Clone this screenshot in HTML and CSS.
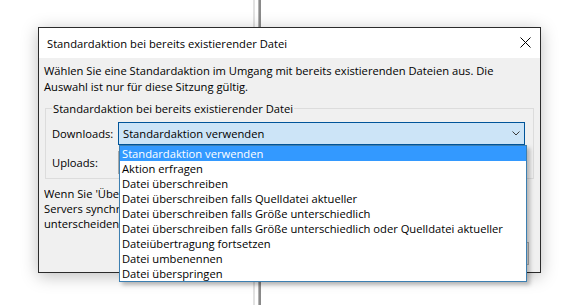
FILE: index.html
```html
<!DOCTYPE html>
<html lang="de">
<head>
<meta charset="utf-8">
<title>Standardaktion bei bereits existierender Datei</title>
<link rel="stylesheet" href="styles.css">
</head>
<body>
<div class="desktop">
  <div class="splitter"></div>

  <div class="dialog">
    <div class="titlebar">
      <span class="title">Standardaktion bei bereits existierender Datei</span>
      <svg class="close" width="11" height="11" viewBox="0 0 11 11">
        <path d="M0.5 0.5 L10.5 10.5 M10.5 0.5 L0.5 10.5" stroke="#000" stroke-width="1" fill="none"/>
      </svg>
    </div>

    <div class="content">
      <p class="intro">Wählen Sie eine Standardaktion im Umgang mit bereits existierenden Dateien aus. Die<br>Auswahl ist nur für diese Sitzung gültig.</p>

      <fieldset class="group">
        <legend>Standardaktion bei bereits existierender Datei</legend>
        <div class="row">
          <span class="lbl">Downloads:</span>
          <div class="combo open">
            <span>Standardaktion verwenden</span>
            <svg class="chev" width="8" height="5" viewBox="0 0 8 5"><path d="M0.5 0.5 L4 4 L7.5 0.5" stroke="#3b3b3b" fill="none"/></svg>
          </div>
        </div>
        <div class="row">
          <span class="lbl">Uploads:</span>
          <div class="combo">
            <span>Standardaktion verwenden</span>
            <svg class="chev" width="8" height="5" viewBox="0 0 8 5"><path d="M0.5 0.5 L4 4 L7.5 0.5" stroke="#3b3b3b" fill="none"/></svg>
          </div>
        </div>
      </fieldset>

      <p class="note">Wenn Sie 'Überschreiben falls Quelldatei aktueller' verwenden, sollten die Uhren des<br>Servers synchronisiert sein. Falls sich die Zeitzonen von Client und Server<br>unterscheiden, stellen Sie die Zeitzonenverschiebung im Servermanager ein.</p>

      <div class="buttons">
        <button class="btn">OK</button>
        <button class="btn">Abbrechen</button>
      </div>
    </div>

    <!-- aufgeklappte Liste der Downloads-Auswahl -->
    <ul class="droplist">
      <li class="sel">Standardaktion verwenden</li>
      <li>Aktion erfragen</li>
      <li>Datei überschreiben</li>
      <li>Datei überschreiben falls Quelldatei aktueller</li>
      <li>Datei überschreiben falls Größe unterschiedlich</li>
      <li>Datei überschreiben falls Größe unterschiedlich oder Quelldatei aktueller</li>
      <li>Dateiübertragung fortsetzen</li>
      <li>Datei umbenennen</li>
      <li>Datei überspringen</li>
    </ul>
  </div>
</div>
</body>
</html>
```

FILE: styles.css
```css
body {
  margin: 0;
  background: #fff;
  font-family: "Open Sans", "Noto Sans", sans-serif;
  font-size: 11.2px;
  color: #000;
}

.desktop {
  position: relative;
  width: 575px;
  height: 305px;
  overflow: hidden;
}

/* Trennlinie des Fensters dahinter */
.splitter {
  position: absolute;
  left: 253px;
  top: 0;
  width: 2px;
  height: 305px;
  background: #e2e2e2;
}
.splitter::after {
  content: "";
  position: absolute;
  left: 5px;
  top: 0;
  width: 2px;
  height: 305px;
  background: #8a8a8a;
  border-left: 1px solid #b5b5b5;
}

.dialog {
  position: absolute;
  left: 38px;
  top: 27px;
  width: 503px;
  height: 246px;
  box-sizing: border-box;
  border: 1px solid #2b2b2b;
  background: #f0f0f0;
  box-shadow: 0 3px 16px rgba(0, 0, 0, 0.26);
  display: flex;
  flex-direction: column;
}

.titlebar {
  height: 30px;
  background: #fff;
  display: flex;
  align-items: center;
  justify-content: space-between;
  padding: 0 9px 0 8px;
}
.title { line-height: 15px; }
.close { display: block; margin-top: -2px; }

.content {
  padding: 0 6px 0 5px;
}

.intro {
  margin: 5px 0 0;
  line-height: 16px;
  white-space: nowrap;
}

.group {
  margin: 6px 0 0 1px;
  padding: 6px 8px 4px 6px;
  border: 1px solid #dcdcdc;
}
.group legend {
  padding: 0 1px;
  line-height: 15px;
}

.row {
  display: flex;
  align-items: center;
}
.row + .row { margin-top: 6px; }

.lbl {
  width: 66px;
  flex: none;
}

.combo {
  flex: 1;
  height: 23px;
  box-sizing: border-box;
  border: 1px solid #adadad;
  background: #e1e1e1;
  display: flex;
  align-items: center;
  justify-content: space-between;
  padding: 0 4px 0 4px;
}
.combo.open {
  background: #cce4f7;
  border-color: #005499;
}
.chev { display: block; }

.note {
  margin: 7px 0 0;
  line-height: 15px;
  white-space: nowrap;
  overflow: hidden;
  width: 470px;
}

.buttons {
  display: flex;
  justify-content: flex-end;
  gap: 7px;
  margin-top: 11px;
  padding-right: 5px;
}
.btn {
  width: 75px;
  height: 23px;
  border: 1px solid #adadad;
  background: #e1e1e1;
  font: inherit;
}

.droplist {
  position: absolute;
  left: 80px;
  top: 117px;
  width: 408px;
  box-sizing: border-box;
  margin: 0;
  padding: 0;
  list-style: none;
  background: #fff;
  border: 1px solid #3c7fb1;
  box-shadow: 3px 3px 4px rgba(0, 0, 0, 0.25);
}
.droplist li {
  height: 15px;
  line-height: 15px;
  padding-left: 2px;
  white-space: nowrap;
}
.droplist li.sel {
  background: #3399ff;
  color: #fff;
}
```
